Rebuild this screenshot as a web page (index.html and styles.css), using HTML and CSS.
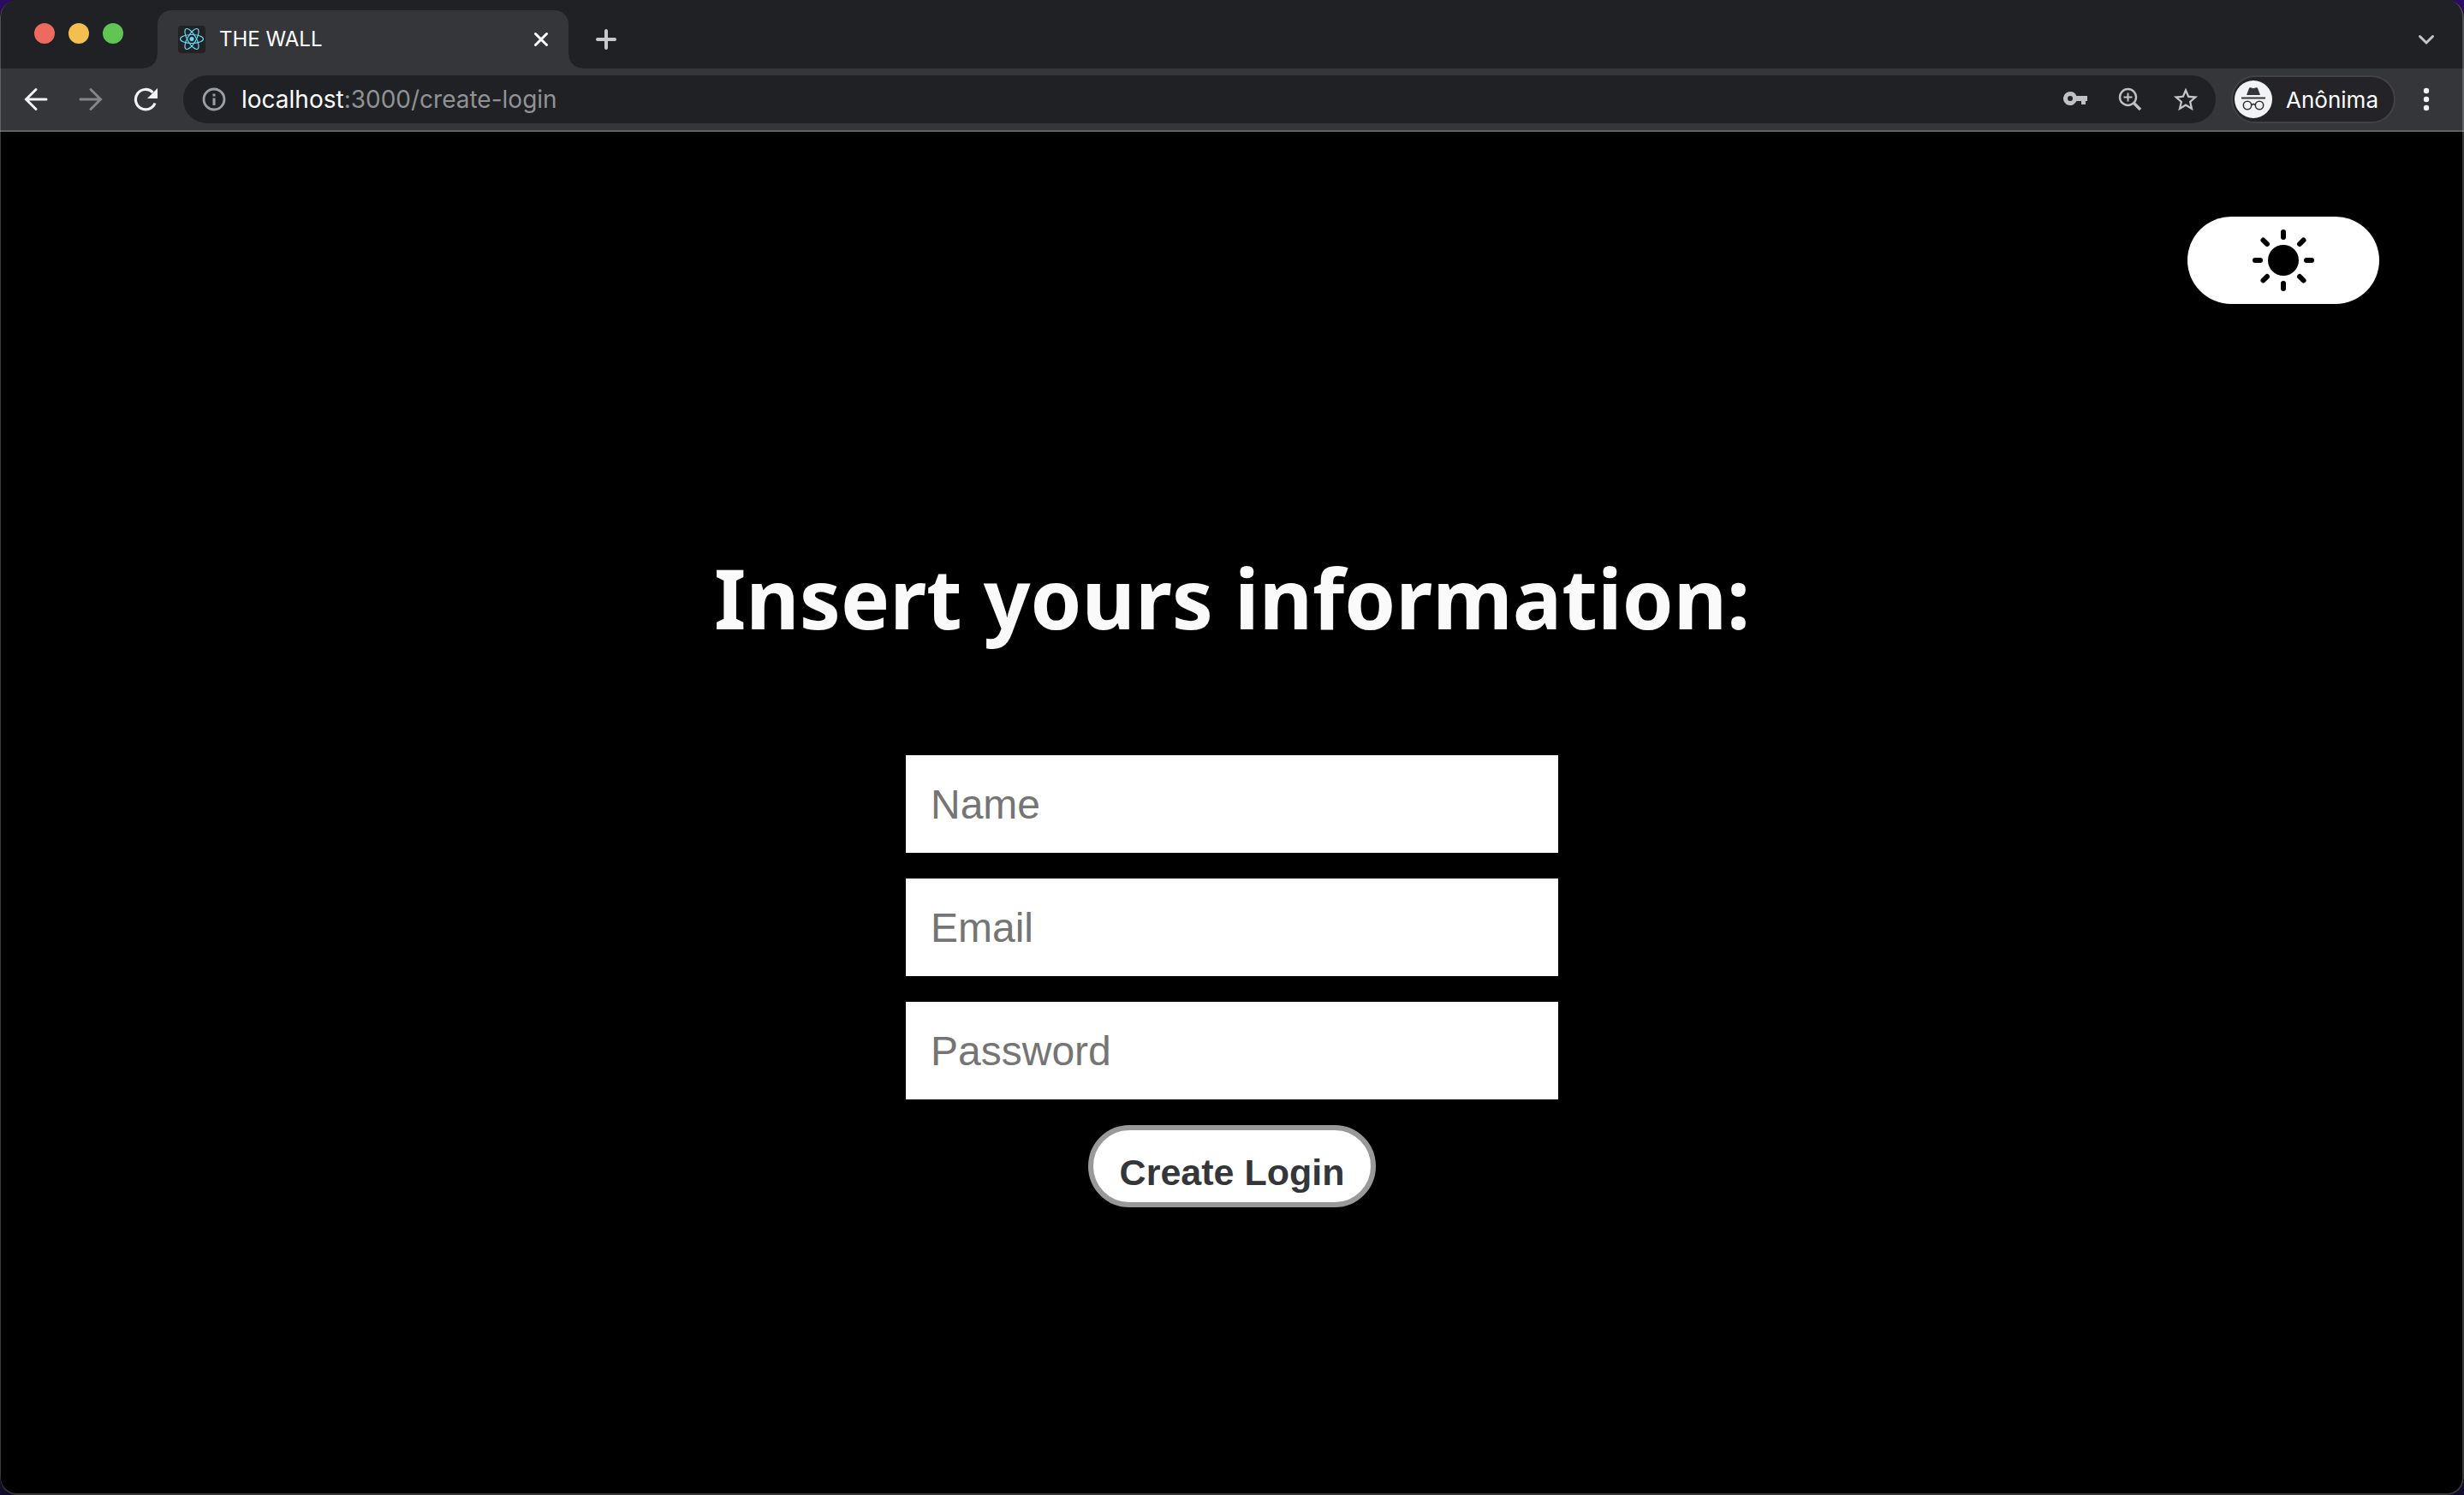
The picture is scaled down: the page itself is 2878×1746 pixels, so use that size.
FILE: index.html
```html
<!DOCTYPE html>
<html lang="en">
<head>
<meta charset="utf-8">
<meta name="viewport" content="width=device-width, initial-scale=1">
<title>THE WALL</title>
<link rel="stylesheet" href="styles.css">
</head>
<body>
<div class="window">
  <header class="browser">
    <div class="tab-strip">
      <div class="traffic-lights">
        <button class="light light-close" aria-label="Close window"></button>
        <button class="light light-minimize" aria-label="Minimize window"></button>
        <button class="light light-zoom" aria-label="Zoom window"></button>
      </div>
      <div class="tab">
        <svg class="favicon" width="32" height="32" viewBox="0 0 32 32" aria-hidden="true">
          <rect width="32" height="32" rx="4" fill="#222"/>
          <g fill="none" stroke="#61dafb" stroke-width="1.2">
            <ellipse cx="16" cy="15.500" rx="13.500" ry="5"/>
            <ellipse cx="16" cy="15.500" rx="13.500" ry="5" transform="rotate(60 16 15.500)"/>
            <ellipse cx="16" cy="15.500" rx="13.500" ry="5" transform="rotate(120 16 15.500)"/>
          </g>
          <circle cx="16" cy="15.500" r="2.500" fill="#61dafb"/>
        </svg>
        <span class="tab-title">THE WALL</span>
        <button class="icon-button" aria-label="Close tab">
          <svg width="16" height="16" viewBox="0 0 16 16"><path d="M1.500 1.500l13 13M14.500 1.500l-13 13" stroke="#fff" stroke-width="3" stroke-linecap="round"/></svg>
        </button>
      </div>
      <button class="icon-button new-tab" aria-label="New tab">
        <svg width="24" height="24" viewBox="0 0 24 24"><path d="M12 2v20M2 12h20" stroke="#c8c9cb" stroke-width="4" stroke-linecap="round"/></svg>
      </button>
      <button class="icon-button tab-search" aria-label="Search tabs">
        <svg width="20" height="14" viewBox="0 0 20 14"><path d="M2.500 3.500l7.500 7.500 7.500-7.500" fill="none" stroke="#c4c5c7" stroke-width="3" stroke-linecap="round"/></svg>
      </button>
    </div>
    <div class="toolbar">
      <nav class="history" aria-label="History">
        <button class="icon-button" aria-label="Back">
          <svg width="28" height="28" viewBox="0 0 28 28"><path d="M26 14H3M14 2.500L2.500 14 14 25.500" fill="none" stroke="#f1f3f4" stroke-width="3" stroke-linecap="round"/></svg>
        </button>
        <button class="icon-button" aria-label="Forward">
          <svg width="28" height="28" viewBox="0 0 28 28"><path d="M2 14h23M14 2.500L25.500 14 14 25.500" fill="none" stroke="#858689" stroke-width="3" stroke-linecap="round"/></svg>
        </button>
        <button class="icon-button" aria-label="Reload">
          <svg width="28" height="28" viewBox="0 0 28 28"><path d="M25 18.500A11.700 11.700 0 1 1 22.500 6" fill="none" stroke="#f1f3f4" stroke-width="3.200"/><path d="M28 1v12H16z" fill="#f1f3f4"/></svg>
        </button>
      </nav>
      <div class="omnibox">
        <svg class="info" width="28" height="28" viewBox="0 0 28 28" aria-hidden="true"><circle cx="14" cy="14" r="12" fill="none" stroke="#9aa0a6" stroke-width="2.800"/><path d="M14 12.500v8.500M14 7.500v3" stroke="#9aa0a6" stroke-width="3"/></svg>
        <div class="url" role="textbox" aria-label="Address"><span class="url-host">localhost</span>:3000/create-login</div>
        <button class="icon-button" aria-label="Passwords">
          <svg width="28" height="28" viewBox="0 0 28 28"><path fill="#c0c1c3" fill-rule="evenodd" d="M8 5a8 8 0 1 0 7.400 11H21v4h5v-4h2v-6H15.400A8 8 0 0 0 8 5zm0 5a3 3 0 1 1 0 6 3 3 0 0 1 0-6z"/></svg>
        </button>
        <button class="icon-button" aria-label="Zoom level">
          <svg width="28" height="28" viewBox="0 0 28 28"><g fill="none" stroke="#c0c1c3"><circle cx="11.500" cy="11.500" r="9.500" stroke-width="2.400"/><path d="M11.500 6.500v10M6.500 11.500h10" stroke-width="2"/><path d="M18 18l8 8" stroke-width="3.400"/></g></svg>
        </button>
        <button class="icon-button" aria-label="Bookmark this tab">
          <svg width="30" height="30" viewBox="0 0 24 24"><path fill="#c4c5c7" d="M22 9.240l-7.190-.62L12 2 9.190 8.630 2 9.240l5.460 4.730L5.820 21 12 17.270 18.180 21l-1.630-7.030L22 9.240zM12 15.400l-3.760 2.270 1-4.280-3.320-2.880 4.380-.38L12 6.100l1.710 4.040 4.380.38-3.320 2.880 1 4.280L12 15.400z" transform="translate(-1.500 -1.100) scale(1.125)"/></svg>
        </button>
      </div>
      <button class="profile">
        <svg width="44" height="44" viewBox="0 0 44 44" aria-hidden="true"><circle cx="22" cy="22" r="22" fill="#f1f3f4"/><path d="M14 17l3-8q.5-1.200 2-.7l3 .9 3-.9q1.500-.5 2 .7l3 8z" fill="#35363a"/><path d="M8 20.500h28" stroke="#35363a" stroke-width="2"/><g fill="none" stroke="#35363a" stroke-width="1.600"><circle cx="15" cy="29" r="4.700"/><circle cx="29" cy="29" r="4.700"/><path d="M19.700 28.500q2.300-1.800 4.600 0"/></g></svg>
        <span>Anônima</span>
      </button>
      <button class="icon-button menu" aria-label="Menu">
        <svg width="8" height="28" viewBox="0 0 8 28"><g fill="#f1f3f4"><circle cx="4" cy="4" r="3.200"/><circle cx="4" cy="14" r="3.200"/><circle cx="4" cy="24" r="3.200"/></g></svg>
      </button>
    </div>
  </header>

  <main class="page">
    <button class="theme-toggle" aria-label="Switch to light theme">
      <svg width="72" height="72" viewBox="0 0 72 72"><circle cx="36" cy="36" r="18"/><path d="M36 3v6M36 63v6M3 36h6M63 36h6M12.500 12.500l4.500 4.500M55 55l4.500 4.500M12.500 59.500l4.500-4.500M55 17l4.500-4.500" stroke="#000" stroke-width="6" stroke-linecap="round"/></svg>
    </button>
    <h1 class="title">Insert yours information:</h1>
    <form class="login-form">
      <input class="field" type="text" name="name" placeholder="Name" aria-label="Name">
      <input class="field" type="email" name="email" placeholder="Email" aria-label="Email">
      <input class="field" type="password" name="password" placeholder="Password" aria-label="Password">
      <button class="submit" type="submit">Create Login</button>
    </form>
  </main>
</div>
</body>
</html>
```
FILE: styles.css
```css
* {
  box-sizing: border-box;
}

body {
  margin: 0;
  background: linear-gradient(#2d0a63, #120c2c);
  font-family: Inter, "Liberation Sans", sans-serif;
}

button {
  border: 0;
  padding: 0;
  background: none;
  color: inherit;
  font: inherit;
}

svg {
  display: block;
  flex: none;
}

.window {
  position: relative;
  display: flex;
  flex-direction: column;
  min-height: 100vh;
  border-radius: 20px;
  overflow: hidden;
  background: #000;
}

/* hairline frame drawn over the window edge */
.window::after {
  content: "";
  position: absolute;
  inset: 0;
  border: 2px solid rgba(255, 255, 255, 0.22);
  border-top-width: 0;
  border-left-width: 1px;
  border-radius: 20px;
  pointer-events: none;
}

.browser {
  color: #fff;
}

.icon-button {
  display: flex;
  align-items: center;
  justify-content: center;
}

.tab-strip {
  display: flex;
  height: 80px;
  padding-right: 34px;
  background: #202124;
}

.traffic-lights {
  display: flex;
  gap: 16px;
  width: 184px;
  padding: 27px 0 0 40px;
}

.light {
  width: 24px;
  height: 24px;
  border-radius: 50%;
}

.light-close {
  background: #ed6a5e;
}

.light-minimize {
  background: #f5bf4f;
}

.light-zoom {
  background: #61c554;
}

.tab {
  position: relative;
  display: flex;
  align-items: center;
  width: 480px;
  height: 68px;
  margin-top: 12px;
  padding: 0 24px;
  border-radius: 16px 16px 0 0;
  background: #35363a;
}

.tab::before,
.tab::after {
  content: "";
  position: absolute;
  bottom: 0;
  width: 16px;
  height: 16px;
}

.tab::before {
  right: 100%;
  background: radial-gradient(circle at 0 0, #202124 15px, #35363a 16px);
}

.tab::after {
  left: 100%;
  background: radial-gradient(circle at 100% 0, #202124 15px, #35363a 16px);
}

.tab-title {
  flex: 1;
  margin-left: 16px;
  font-size: 24px;
  line-height: 32px;
}

.new-tab {
  margin: 12px 0 0 32px;
}

.tab-search {
  margin: 12px 0 0 auto;
}

.toolbar {
  display: flex;
  align-items: center;
  height: 74px;
  padding: 0 40px 0 28px;
  border-bottom: 2px solid #606164;
  background: #35363a;
}

.history {
  display: flex;
  gap: 36px;
  margin-right: 30px;
}

.omnibox {
  display: flex;
  flex: 1;
  align-items: center;
  gap: 36px;
  height: 56px;
  padding: 0 20px 0 22px;
  border-radius: 28px;
  background: #202124;
}

.url {
  flex: 1;
  margin-left: -18px;
  color: #919294;
  font-size: 28px;
  line-height: 36px;
}

.url-host {
  color: #fff;
}

.profile {
  display: flex;
  align-items: center;
  gap: 16px;
  height: 56px;
  margin-left: 18px;
  padding: 0 18px 0 2px;
  border: 2px solid #414146;
  border-radius: 28px;
  background: #242328;
  font-size: 26px;
}

.menu {
  margin-left: 32px;
}

.page {
  display: flex;
  flex: 1;
  flex-direction: column;
  align-items: center;
  padding: 99px 99px 120px;
}

.theme-toggle {
  display: flex;
  align-items: center;
  align-self: flex-end;
  justify-content: center;
  width: 224px;
  height: 102px;
  border-radius: 51px;
  background: #fff;
}

.title {
  margin: 285px 0 126px;
  color: #fafafa;
  font-family: "Noto Sans", sans-serif;
  font-size: 96px;
  font-weight: 700;
  line-height: 116px;
}

.login-form {
  display: flex;
  flex-direction: column;
  align-items: center;
  gap: 30px;
  width: 762px;
  max-width: 100%;
  font-family: "Liberation Sans", Arial, sans-serif;
}

.field {
  width: 100%;
  height: 114px;
  padding: 0 29px;
  border: 0;
  border-radius: 0;
  background: #fff;
  color: #000;
  font-family: inherit;
  font-size: 48px;
}

.field::placeholder {
  color: #757575;
}

.submit {
  height: 96px;
  padding: 14px 31px 0;
  border: 6px solid #999;
  border-radius: 48px;
  background: #fff;
  color: #35363a;
  font-size: 43px;
  font-weight: 700;
}
```
